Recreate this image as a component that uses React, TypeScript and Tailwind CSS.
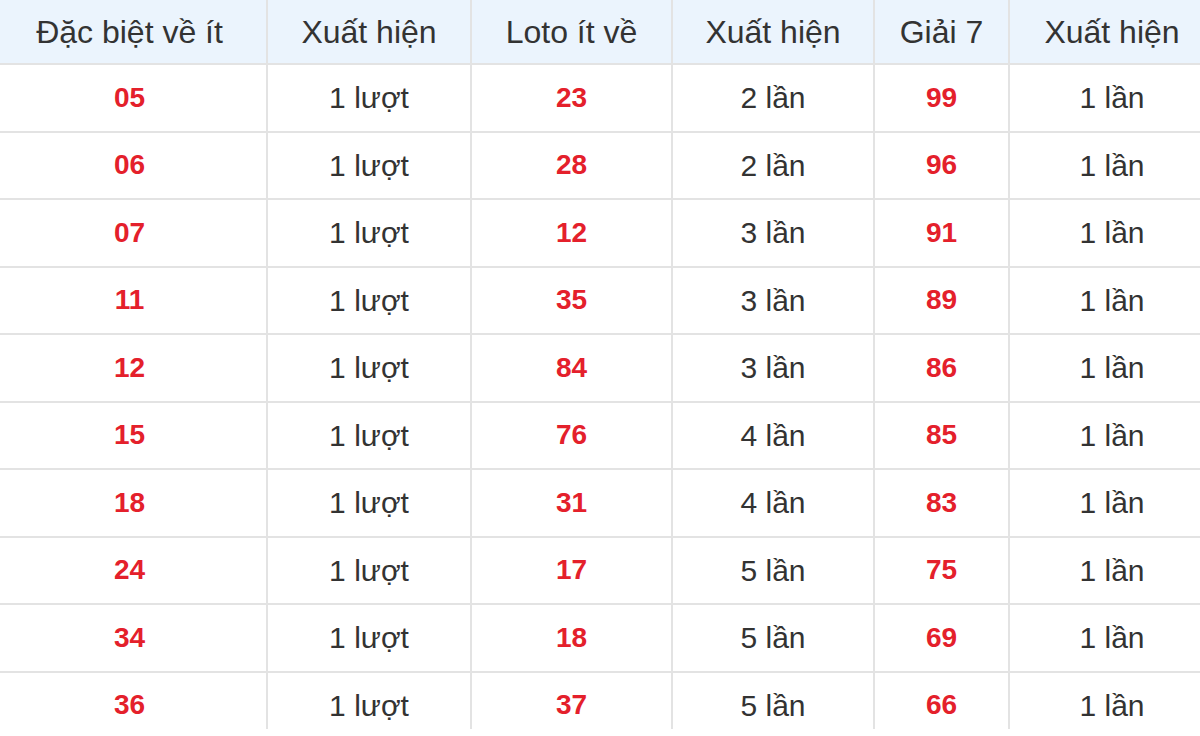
const rows: [string, string, string, string, string, string][] = [
  ["05", "1 lượt", "23", "2 lần", "99", "1 lần"],
  ["06", "1 lượt", "28", "2 lần", "96", "1 lần"],
  ["07", "1 lượt", "12", "3 lần", "91", "1 lần"],
  ["11", "1 lượt", "35", "3 lần", "89", "1 lần"],
  ["12", "1 lượt", "84", "3 lần", "86", "1 lần"],
  ["15", "1 lượt", "76", "4 lần", "85", "1 lần"],
  ["18", "1 lượt", "31", "4 lần", "83", "1 lần"],
  ["24", "1 lượt", "17", "5 lần", "75", "1 lần"],
  ["34", "1 lượt", "18", "5 lần", "69", "1 lần"],
  ["36", "1 lượt", "37", "5 lần", "66", "1 lần"],
];

const headers = ["Đặc biệt về ít", "Xuất hiện", "Loto ít về", "Xuất hiện", "Giải 7", "Xuất hiện"];

const cols = "grid grid-cols-[275px_204px_201px_202px_135px_204px]";

function Cell({
  children,
  red,
  head,
  last,
}: {
  children: string;
  red?: boolean;
  head?: boolean;
  last?: boolean;
}) {
  const text = head
    ? "text-[32px] text-[#333333]"
    : red
      ? "text-[28px] font-bold text-[#e4202b]"
      : "text-[30px] text-[#333333]";
  return (
    <div
      className={`flex items-center justify-center border-[#e3e3e3] ${last ? "" : "border-r-2"}`}
    >
      <span className={`whitespace-nowrap ${text}`}>{children}</span>
    </div>
  );
}

export default function App() {
  return (
    <div className="w-[1200px] h-[736px] overflow-hidden bg-white font-['Liberation_Sans',Arial,sans-serif]">
      <div className="w-[1221px] -ml-[7px] h-[729px] overflow-hidden">
        <div className={`${cols} h-[65px] bg-[#ebf4fd] border-b-2 border-[#e3e3e3]`}>
          {headers.map((h, i) => (
            <Cell key={i} head last={i === 5}>
              {h}
            </Cell>
          ))}
        </div>
        {rows.map((r, i) => (
          <div key={i} className={`${cols} h-[67.5px] border-b-2 border-[#e3e3e3]`}>
            {r.map((v, j) => (
              <Cell key={j} red={j % 2 === 0} last={j === 5}>
                {v}
              </Cell>
            ))}
          </div>
        ))}
      </div>
    </div>
  );
}
